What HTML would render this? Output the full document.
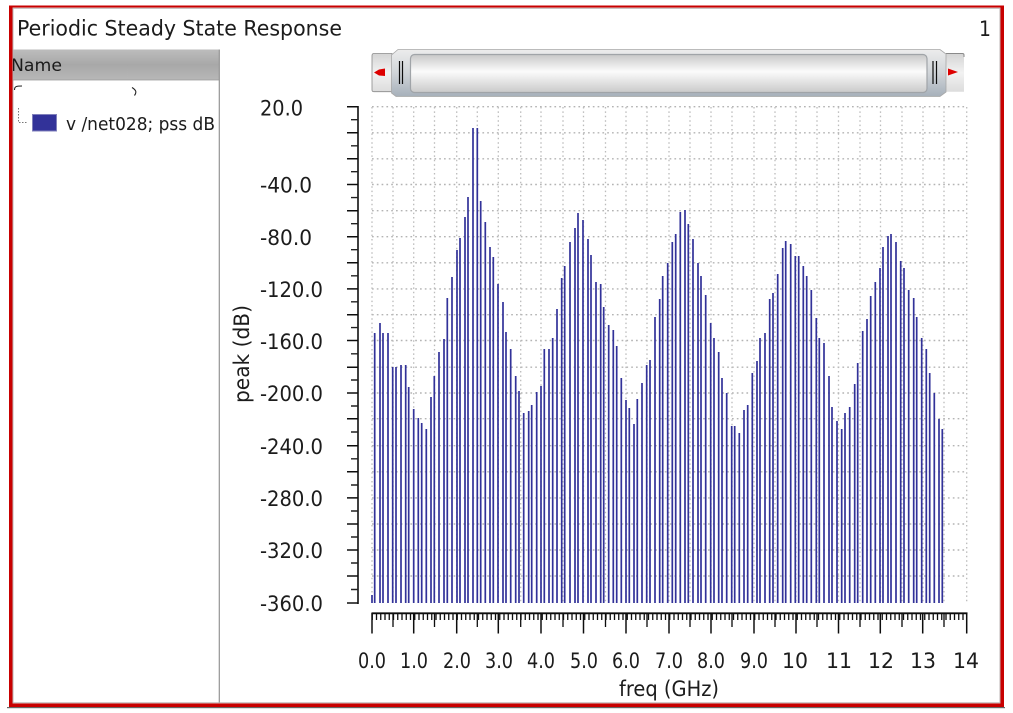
<!DOCTYPE html>
<html><head><meta charset="utf-8"><title>Periodic Steady State Response</title>
<style>html,body{margin:0;padding:0;background:#fff;width:1013px;height:713px;overflow:hidden}svg{display:block}text{font-family:"DejaVu Sans","Liberation Sans",sans-serif;fill:#1a1a1a}</style>
</head><body>
<svg width="1013" height="713" viewBox="0 0 1013 713" xmlns="http://www.w3.org/2000/svg">
<defs>
<linearGradient id="hd" x1="0" y1="0" x2="0" y2="1"><stop offset="0" stop-color="#bcbcbc"/><stop offset=".5" stop-color="#a8a8a8"/><stop offset="1" stop-color="#b8b8b8"/></linearGradient>
<linearGradient id="hb" x1="0" y1="0" x2="0" y2="1"><stop offset="0" stop-color="#ececec"/><stop offset=".5" stop-color="#d0d4d8"/><stop offset="1" stop-color="#a6b0ba"/></linearGradient>
<linearGradient id="in" x1="0" y1="0" x2="0" y2="1"><stop offset="0" stop-color="#c8c8c8"/><stop offset=".45" stop-color="#fbfbfb"/><stop offset="1" stop-color="#cacaca"/></linearGradient>
<linearGradient id="bt" x1="0" y1="0" x2="0" y2="1"><stop offset="0" stop-color="#d4d4d4"/><stop offset=".5" stop-color="#f2f2f2"/><stop offset="1" stop-color="#dcdcdc"/></linearGradient>
<filter id="soft" x="0" y="0" width="100%" height="100%"><feGaussianBlur stdDeviation=".35"/></filter>
</defs>
<rect width="1013" height="713" fill="#fff"/>
<g filter="url(#soft)">
<!-- frame -->
<rect x="7" y="707" width="998" height="1.2" fill="#666"/>
<rect x="10.8" y="5.8" width="991.4" height="699.4" fill="none" stroke="#c80000" stroke-width="3.6"/>
<rect x="13" y="8.3" width="987" height="694.5" fill="none" stroke="#bdb5b5" stroke-width="1"/>
<!-- title -->
<text x="17" y="35.5" font-size="21" textLength="325" lengthAdjust="spacingAndGlyphs">Periodic Steady State Response</text>
<text x="979" y="36" font-size="21" textLength="12" lengthAdjust="spacingAndGlyphs">1</text>
<!-- left panel -->
<rect x="13" y="49.5" width="206.5" height="30.5" fill="url(#hd)"/>
<path d="M219.3 49.5V702.5" stroke="#949494" stroke-width="1.2"/>
<path d="M13 80H219" stroke="#999" stroke-width=".8"/>
<svg x="13" y="49" width="207" height="32" viewBox="13 49 207 32"><text x="11" y="71" font-size="17" textLength="51" lengthAdjust="spacingAndGlyphs" fill="#222">Name</text></svg>
<path d="M14.5 90C14.5 86.5 16 86 22 86M132 87.5C136 90 137 92 134.5 95.5" fill="none" stroke="#222" stroke-width="1.1"/>
<path d="M18.5 108V122.5H28" fill="none" stroke="#777" stroke-width="1" stroke-dasharray="1.5 1.5"/>
<rect x="32.5" y="114.5" width="24" height="16.5" fill="#333399" stroke="#8080bb" stroke-width="1"/>
<text x="66" y="130" font-size="18" textLength="149" lengthAdjust="spacingAndGlyphs">v /net028; pss dB</text>
<!-- scrollbar -->
<path d="M374 53.5H392V91.7H374Q372 91.7 372 89.7V55.5Q372 53.5 374 53.5Z" fill="url(#bt)" stroke="#8a8a8a" stroke-width=".8"/>
<path d="M374 72.5L379 69.5L385 68.5V76L379 75.5Z" fill="#dd0000"/>
<path d="M946 53.5H962.5Q964 53.5 964 55V91.7H946Z" fill="url(#bt)"/>
<path d="M946 53.5H962.5Q964 53.5 964 55V57" fill="none" stroke="#8a8a8a" stroke-width="1"/>
<path d="M948 68.5L958 72L948 75.5Z" fill="#dd0000"/>
<path d="M398 49.5H940L946 54V92L940 96.5H396L391.5 93V55Z" fill="url(#hb)" stroke="#a8a8a8" stroke-width=".8"/>
<rect x="410.5" y="54.5" width="516.5" height="38" rx="4" fill="url(#in)" stroke="#a0a4a8" stroke-width="1.2"/>
<path d="M399.5 61V84M402.5 61V84M933 61V84M936.5 61V84" stroke="#111" stroke-width="1.2"/>
<!-- grid -->
<path d="M372 106.7H967M372 132.8H967M372 158.8H967M372 184.5H967M372 210.7H967M372 236.7H967M372 262.8H967M372 288.9H967M372 314.7H967M372 340.5H967M372 367.2H967M372 393H967M372 418.7H967M372 445.7H967M372 471.8H967M372 497.9H967M372 524H967M372 550H967M372 576H967" stroke="#b4b4b4" stroke-width="1.4" stroke-dasharray="1.7 3.1" fill="none"/>
<path d="M372 107V603M393 107V603M413.7 107V603M434.5 107V603M456.7 107V603M477.3 107V603M498.3 107V603M520.7 107V603M541 107V603M563 107V603M583.5 107V603M605.5 107V603M626 107V603M647 107V603M669 107V603M690 107V603M711 107V603M732 107V603M754 107V603M775 107V603M796 107V603M817 107V603M838.5 107V603M860 107V603M880.5 107V603M902 107V603M923 107V603M944 107V603M966.7 107V603" stroke="#bbb" stroke-width="1.3" stroke-dasharray="1.5 2.9" fill="none"/>
<!-- bars -->
<path stroke="#333399" stroke-width="1.7" fill="none" d="M372 595V603M374.7 333V603M380 323V603M383 333V603M388 333V603M392.7 367V603M396 367V603M401 365V603M405.7 365V603M408.7 387V603M413.7 409V603M418.3 418V603M421.7 423V603M426.3 429V603M431 397V603M434.3 376V603M439 352V603M444 339V603M447.3 298V603M452 277V603M457 250V603M460 238V603M465 217V603M468 197V603M473 128V603M477.3 128V603M480.7 201V603M485.3 222V603M490 247V603M493.3 257V603M498 284V603M503 302V603M506 332V603M510.7 349V603M515.7 376V603M519 391V603M523.7 413V603M528.7 411V603M531.7 405V603M536.7 392V603M541 386V603M544.3 349V603M549 349V603M552.7 338V603M557 309V603M561.7 278V603M564.7 266V603M570 242V603M575 228V603M578 213V603M583 220V603M588 239V603M591 255V603M596 282V603M600.7 284V603M603.7 307V603M608.7 325V603M613.3 330V603M616.7 346V603M621.3 378V603M626 400V603M629.3 408V603M634 424V603M637.3 399V603M642 383V603M646.7 365V603M650 360V603M655 317V603M659.7 299V603M662.7 276V603M667.7 263V603M672.3 242V603M675.7 234V603M680.3 212V603M685 210V603M688.3 224V603M693 239V603M698 263V603M701 276V603M705.7 295V603M710.7 323V603M714 338V603M718.7 352V603M722 378V603M726.7 393V603M731.7 426V603M734.7 426V603M739.3 433V603M744 410V603M747.7 405V603M752.3 373V603M757 361V603M760 338V603M765 333V603M769.7 299V603M773 293V603M777.7 274V603M782.7 248V603M785.7 241V603M790.7 244V603M795.3 256V603M798.7 256V603M803.3 266V603M806.7 276V603M811.3 290V603M816.3 318V603M819.3 338V603M824 343V603M829 376V603M832 407V603M837 421V603M841.7 429V603M845 413V603M849.7 407V603M854.7 384V603M857.7 363V603M862.7 331V603M867 319V603M870.7 296V603M875.3 282V603M880 268V603M883 247V603M888 236V603M891 234V603M896 242V603M900.7 261V603M904 268V603M908.7 290V603M913.7 298V603M916.7 317V603M921.7 338V603M926.3 349V603M929.7 373V603M934.3 393V603M939 419V603M942.3 429V603"/>
<!-- y axis -->
<path d="M358 106V604" stroke="#111" stroke-width="1.6"/>
<path stroke="#111" stroke-width="1.5" fill="none" d="M347 106.7H358M347 132.8H358M347 158.8H358M347 184.5H358M347 210.7H358M347 236.7H358M347 262.8H358M347 288.9H358M347 314.7H358M347 340.5H358M347 367.2H358M347 393H358M347 418.7H358M347 445.7H358M347 471.8H358M347 497.9H358M347 524H358M347 550H358M347 576H358M347 603H358"/>
<path stroke="#222" stroke-width="1.4" fill="none" d="M351 119.7H358M351 145.8H358M351 171.7H358M351 197.6H358M351 223.7H358M351 249.7H358M351 275.8H358M351 301.8H358M351 327.6H358M351 353.8H358M351 380H358M351 406H358M351 432H358M351 458.8H358M351 485H358M351 511H358M351 537H358M351 563H358M351 589.5H358"/>
<g font-size="21">
<text x="260" y="115.5" textLength="43" lengthAdjust="spacingAndGlyphs">20.0</text>
<text x="260" y="192.5" textLength="52" lengthAdjust="spacingAndGlyphs">-40.0</text>
<text x="260" y="245" textLength="52" lengthAdjust="spacingAndGlyphs">-80.0</text>
<text x="260" y="297" textLength="63" lengthAdjust="spacingAndGlyphs">-120.0</text>
<text x="260" y="349" textLength="63" lengthAdjust="spacingAndGlyphs">-160.0</text>
<text x="260" y="401" textLength="63" lengthAdjust="spacingAndGlyphs">-200.0</text>
<text x="260" y="454" textLength="63" lengthAdjust="spacingAndGlyphs">-240.0</text>
<text x="260" y="506" textLength="63" lengthAdjust="spacingAndGlyphs">-280.0</text>
<text x="260" y="558" textLength="63" lengthAdjust="spacingAndGlyphs">-320.0</text>
<text x="260" y="611" textLength="63" lengthAdjust="spacingAndGlyphs">-360.0</text>
</g>
<text transform="translate(249,403) rotate(-90)" font-size="21" textLength="98" lengthAdjust="spacingAndGlyphs">peak (dB)</text>
<!-- x axis -->
<path d="M371.5 613.3H967.5" stroke="#111" stroke-width="1.8"/>
<path d="M371.6 617H967" stroke="#111" stroke-width="6" stroke-dasharray="1.3 2.95" fill="none"/>
<path stroke="#111" stroke-width="1.3" fill="none" d="M393 613V627M434.5 613V627M477.3 613V627M520.7 613V627M563 613V627M605.5 613V627M647 613V627M690 613V627M732 613V627M775 613V627M817 613V627M860 613V627M902 613V627M944 613V627"/>
<path stroke="#111" stroke-width="1.5" fill="none" d="M372 613V633.5M413.7 613V633.5M456.7 613V633.5M498.3 613V633.5M541 613V633.5M583.5 613V633.5M626 613V633.5M669 613V633.5M711 613V633.5M754 613V633.5M796 613V633.5M838.5 613V633.5M880.3 613V633.5M922.7 613V633.5M966.7 613V633.5"/>
<g font-size="21">
<text x="358" y="668" textLength="28" lengthAdjust="spacingAndGlyphs">0.0</text>
<text x="400" y="668" textLength="28" lengthAdjust="spacingAndGlyphs">1.0</text>
<text x="443" y="668" textLength="28" lengthAdjust="spacingAndGlyphs">2.0</text>
<text x="485" y="668" textLength="28" lengthAdjust="spacingAndGlyphs">3.0</text>
<text x="527" y="668" textLength="28" lengthAdjust="spacingAndGlyphs">4.0</text>
<text x="570" y="668" textLength="28" lengthAdjust="spacingAndGlyphs">5.0</text>
<text x="612" y="668" textLength="28" lengthAdjust="spacingAndGlyphs">6.0</text>
<text x="655" y="668" textLength="28" lengthAdjust="spacingAndGlyphs">7.0</text>
<text x="697" y="668" textLength="28" lengthAdjust="spacingAndGlyphs">8.0</text>
<text x="740" y="668" textLength="28" lengthAdjust="spacingAndGlyphs">9.0</text>
<text x="782" y="668" textLength="26" lengthAdjust="spacingAndGlyphs">10</text>
<text x="826" y="668" textLength="26" lengthAdjust="spacingAndGlyphs">11</text>
<text x="868" y="668" textLength="26" lengthAdjust="spacingAndGlyphs">12</text>
<text x="910" y="668" textLength="26" lengthAdjust="spacingAndGlyphs">13</text>
<text x="953" y="668" textLength="26" lengthAdjust="spacingAndGlyphs">14</text>
</g>
<text x="619" y="696" font-size="21" textLength="100" lengthAdjust="spacingAndGlyphs">freq (GHz)</text>
</g>
</svg>
</body></html>
